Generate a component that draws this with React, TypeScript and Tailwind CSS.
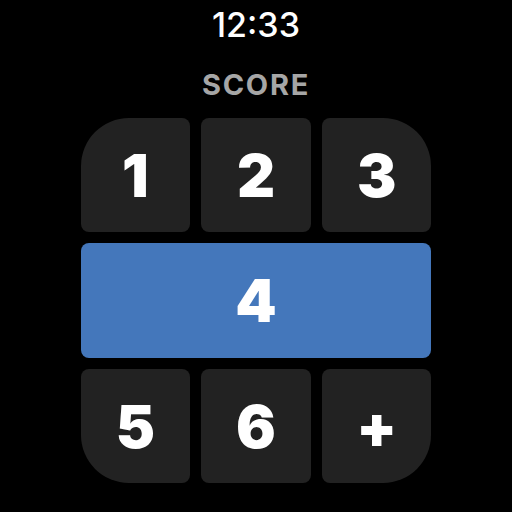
const KEYS = [
  { label: "1", cls: "rounded-tl-[48px]" },
  { label: "2", cls: "" },
  { label: "3", cls: "rounded-tr-[48px]" },
];

const BOTTOM = [
  { label: "5", cls: "rounded-bl-[48px]" },
  { label: "6", cls: "" },
  { label: "+", cls: "rounded-br-[48px]" },
];

function Key({ label, cls }: { label: string; cls: string }) {
  return (
    <button
      className={`h-[114px] rounded-[8px] bg-[#222222] text-white flex items-center justify-center text-[59px] font-black leading-none ${cls}`}
    >
      {label}
    </button>
  );
}

export default function App() {
  return (
    <div
      className="w-[512px] h-[512px] bg-black flex flex-col items-center overflow-hidden"
      style={{ fontFamily: "Inter, 'Noto Sans', sans-serif" }}
    >
      {/* Status time */}
      <div className="mt-[8px] text-[34px] font-medium leading-none text-white">12:33</div>

      {/* Title */}
      <div className="mt-[28px] text-[29px] font-bold leading-none text-[#a6a6a6] tracking-[0.06em]">
        SCORE
      </div>

      {/* Keypad */}
      <div className="mt-[19px] w-[351px] grid grid-cols-3 gap-[11px]">
        {KEYS.map((k) => (
          <Key key={k.label} {...k} />
        ))}
        <button className="col-span-3 h-[115px] rounded-[8px] bg-[#4477bb] text-white flex items-center justify-center text-[59px] font-black leading-none">
          4
        </button>
        {BOTTOM.map((k) => (
          <Key key={k.label} {...k} />
        ))}
      </div>
    </div>
  );
}
